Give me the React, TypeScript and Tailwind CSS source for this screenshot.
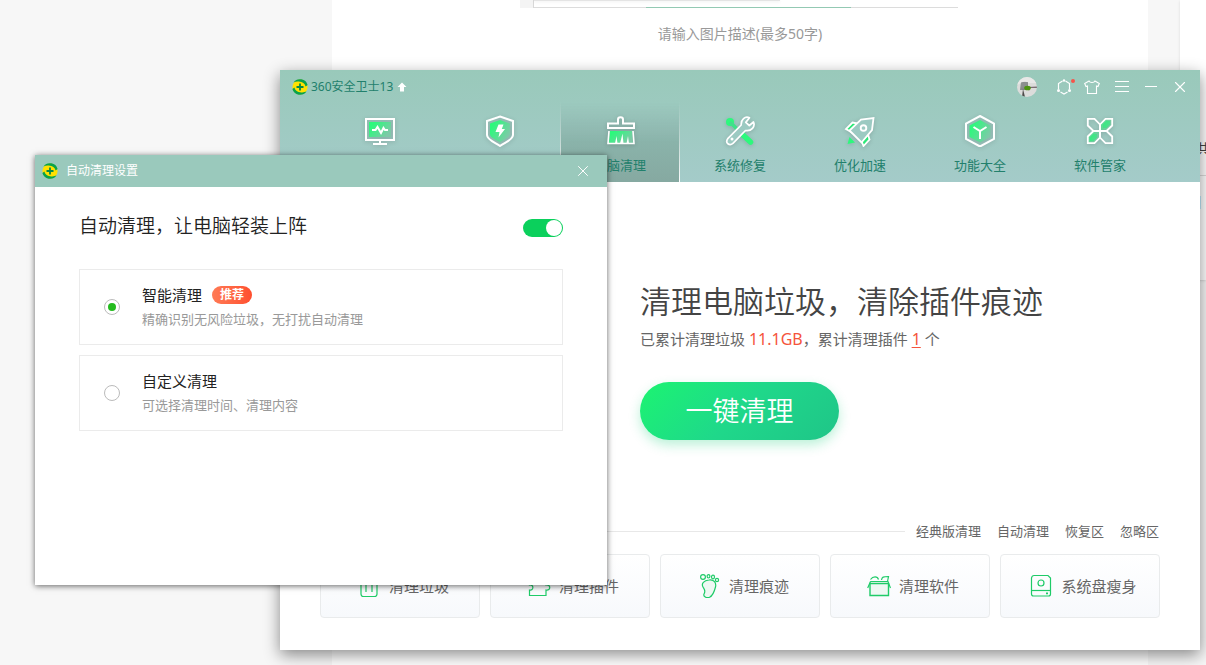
import { useState } from 'react'
import type { ReactNode } from 'react'
import { X } from 'lucide-react'

function Logo() {
  return (
    <svg className="w-4 h-4 shrink-0" viewBox="0 0 16 16" aria-hidden="true">
      <circle cx="8" cy="8" r="7.6" fill="#ffe100" />
      <path d="M1.5 3.400A8 8 0 0 1 15.600 6L13.600 7.500A6.500 6.500 0 0 0 8 2.800C5.500 2.400 3.500 2.600 1.500 3.400Z" fill="#0aa34a" />
      <path d="M14.500 12.600A8 8 0 0 1 .4 10L2.400 8.500A6.500 6.500 0 0 0 8 13.200C10.500 13.600 12.500 13.400 14.500 12.600Z" fill="#0aa34a" />
      <path d="M8 4.500V11.500M4.500 8H11.500" stroke="#068a45" strokeWidth="1.800" />
    </svg>
  )
}

function NavIcon({ children }: { children: ReactNode }) {
  return (
    <svg
      className="w-8 h-8 drop-shadow-sm"
      viewBox="0 0 32 32"
      fill="none"
      stroke="#fff"
      strokeWidth="2"
      aria-hidden="true"
    >
      {children}
    </svg>
  )
}

function CardIcon({ children }: { children: ReactNode }) {
  return (
    <svg
      className="w-6 h-6 shrink-0"
      viewBox="0 0 24 24"
      fill="none"
      stroke="#1fcb68"
      strokeWidth="1.2"
      aria-hidden="true"
    >
      {children}
    </svg>
  )
}

const tabs = [
  {
    label: '电脑体检',
    icon: (
      <NavIcon>
        <path d="M2 4H30V25H2Z" />
        <rect x="5" y="7" width="22" height="15" fill="url(#glow)" stroke="none" />
        <path d="M8 15H11.500L13.500 12L17 18L19.500 13L21 15H24" />
        <path d="M16 25V29M9 29H23" />
      </NavIcon>
    ),
  },
  {
    label: '木马查杀',
    icon: (
      <NavIcon>
        <path d="M16 1.5L29 6V20C29 25 20 28 16 31C12 28 3 25 3 20V6Z" />
        <path d="M16 5L26 8.5V19C26 23 19 25 16 27.5C13 25 6 23 6 19V8.5Z" fill="url(#glow)" stroke="none" />
        <path d="M14.5 9.5H19.5L17.8 14H21L14.5 22.5L15.5 17H11.5Z" fill="#fff" stroke="none" />
      </NavIcon>
    ),
  },
  {
    label: '电脑清理',
    icon: (
      <NavIcon>
        <path d="M4 8.5H14V4.500C14 1.500 19 1.500 19 4.500V8.500H30V13H4Z" />
        <path d="M6 16H28L29 28H5Z" fill="url(#glow)" stroke="none" />
        <path d="M5 16L4 28.500H30L29 16" strokeWidth="1.600" />
        <path d="M11 28.500L12.500 21L13.500 28.500ZM16 28.500L18.500 18.500L19.500 28.500ZM22.500 28.500L24 21L25 28.500Z" fill="#fff" stroke="none" />
      </NavIcon>
    ),
  },
  {
    label: '系统修复',
    icon: (
      <NavIcon>
        <circle cx="6" cy="7" r="4" fill="#2cf97c" stroke="none" />
        <path d="M6 7L13 14" stroke="#3fe08a" strokeWidth="3.5" />
        <path d="M19 20L26.500 27" stroke="#2cf97c" strokeWidth="5.500" strokeLinecap="round" />
        <path
          d="M25.500 2.800C21 .8 16.800 4.500 17.200 10L4 23.300C.5 28 5.500 31.500 9.200 28.200L21.500 15.500C27.500 16.500 31.500 11.500 29.500 7L25.300 10.500L21.800 7.400Z"
          fill="#9ccac2"
          strokeWidth="1.700"
          strokeLinejoin="round"
        />
        <circle cx="8" cy="24" r="1.5" fill="#fff" stroke="none" />
      </NavIcon>
    ),
  },
  {
    label: '优化加速',
    icon: (
      <NavIcon>
        <path d="M3.500 29L5.500 22L11 27.500Z" fill="#2cf97c" stroke="none" />
        <path d="M8 17.500L2 14L8.500 7.500L13.500 8.500Z" fill="#2ce878" strokeWidth="1.8" />
        <path d="M17.500 26L19.500 31L25.500 24.500L24 19.500Z" fill="#2ce878" strokeWidth="1.8" />
        <path d="M5.500 15.500L17.500 27.500L28 15L29.500 3L17 4.500Z" fill="#9ccac2" strokeWidth="1.8" />
        <circle cx="19.500" cy="13" r="2.800" strokeWidth="1.900" />
      </NavIcon>
    ),
  },
  {
    label: '功能大全',
    icon: (
      <NavIcon>
        <path d="M16 1L30 8.500V24L16 31.500L2 24V8.500Z" />
        <path d="M16 5L26.500 10.500V22L16 27.500L5.500 22V10.500Z" fill="url(#glow)" stroke="none" />
        <path d="M9.500 12L16 16L22.500 12M16 16V24" />
      </NavIcon>
    ),
  },
  {
    label: '软件管家',
    icon: (
      <NavIcon>
        <path d="M19 13V9.500L22.500 6H26V9.500L22.500 13Z" fill="#2ce878" stroke="none" />
        <path d="M13 19V22.500L9.500 26H6V22.500L9.500 19Z" fill="#2ce878" stroke="none" />
        <path d="M16 16V9.500L21.500 3.800H28.200V10.500L22.500 16Z" fill="url(#glow)" fillOpacity="0.6" strokeWidth="1.800" />
        <path d="M16 16V22.500L10.500 28.200H3.800V21.500L9.500 16Z" fill="url(#glow)" fillOpacity="0.6" strokeWidth="1.800" />
        <path d="M16 16H9.500L3.800 10.500V3.800H10.500L16 9.500Z" strokeWidth="1.800" />
        <path d="M16 16H22.500L28.200 21.500V28.200H21.500L16 22.500Z" strokeWidth="1.800" />
      </NavIcon>
    ),
  },
]

const cards = [
  {
    label: '清理垃圾',
    icon: (
      <CardIcon>
        <path d="M2 6H22M8 6V3H16V6M4 6V20Q4 22.500 6.500 22.500H17.500Q20 22.500 20 20V6M9 10V18M15 10V18" />
      </CardIcon>
    ),
  },
  {
    label: '清理插件',
    icon: (
      <CardIcon>
        <path d="M3 6H8C7 1 15 1 14 6H19V11C24 10 24 17 19 16V21.500H2.500V16C7 17 7 10 2.500 11Z" />
      </CardIcon>
    ),
  },
  {
    label: '清理痕迹',
    icon: (
      <CardIcon>
        <path
          d="M12 6C17 5 19.500 9 18.500 13C17.500 17 15.500 22 12.500 23.300C9.500 24.500 6 22.500 7 20C9 17 7.500 15.500 6 13C4 9.500 7 6.500 12 6Z"
          fill="#eef8f3"
        />
        <circle cx="6" cy="3" r="2.400" />
        <ellipse cx="11.500" cy="2.300" rx="1.400" ry="1.700" />
        <ellipse cx="16" cy="3" rx="1.500" ry="1.800" />
        <circle cx="20" cy="6" r="1.600" />
      </CardIcon>
    ),
  },
  {
    label: '清理软件',
    icon: (
      <CardIcon>
        <path d="M3 9.500H21.500V21.500H3Z" fill="#eef8f3" strokeWidth="1.400" />
        <path d="M3.500 7.500H21L23.500 14M3.500 7.500L.7 14M3.500 5.500C6 2 10.500 2 11.500 5.500M14.500 6C15 3 16 2.500 21.500 2.500L20.500 7.500" />
      </CardIcon>
    ),
  },
  {
    label: '系统盘瘦身',
    icon: (
      <CardIcon>
        <path d="M5 1.500H19L21.500 4V20Q21.500 22 19.500 22H4.500Q2.500 22 2.500 20V4Q3 1.500 5 1.500Z" />
        <path d="M2.500 16.500H21.500" />
        <circle cx="12" cy="9" r="3" />
        <path d="M17 19.300H19" strokeWidth="1.800" />
      </CardIcon>
    ),
  },
]

const links = ['经典版清理', '自动清理', '恢复区', '忽略区']

function ArticlePage() {
  return (
    <div className="min-h-screen flex bg-[#f7f7f7]">
      <div className="flex-1 ml-[332px] bg-white flex flex-col items-center">
        <div className="w-[438px] h-2 -ml-[2px] flex bg-[#f4f4f4] pl-[13px]">
          <div className="flex-1 flex flex-col justify-between bg-white border-l border-[#d8d8d8]">
            <div className="w-[246px] h-px bg-[#e4e4e4] shadow-sm" />
            <div className="h-px pl-[112px] bg-[#dcdcdc]">
              <div className="w-[205px] h-px bg-[#93c9b3]" />
            </div>
          </div>
        </div>
        <p className="mt-4 text-sm leading-5 text-[#999]">请输入图片描述(最多50字)</p>
      </div>
      <div className="w-[58px] pl-8">
        <div className="h-[280px] pt-[139px] bg-white shadow text-sm leading-5 text-[#444]">
          <p className="pl-4">共</p>
          <div className="mt-4 border-t border-[#ddd]" />
          <p className="mt-4 pl-2 font-bold">目</p>
        </div>
      </div>
    </div>
  )
}

function MainWindow() {
  return (
    <main className="absolute left-[280px] right-[6px] top-[70px] bg-white shadow-[0_5px_15px_rgba(0,0,0,0.45)]">
      <header className="bg-linear-to-b from-[#99c9ba] to-[#a4cbc9]">
        <div className="h-8 flex items-center pl-3 pr-[11px] pt-0.5">
          <Logo />
          <h1 className="ml-[3px] text-xs text-[#22806c]">360安全卫士13</h1>
          <svg className="w-[10px] h-[10px] ml-1" viewBox="0 0 10 10" aria-hidden="true">
            <path d="M5 .5L9.500 5H7V9.500H3V5H.5Z" fill="#fff" />
          </svg>
          <div className="ml-auto flex items-center text-white">
            <button aria-label="账号" className="mr-[18px]">
              <svg className="w-5 h-5" viewBox="0 0 20 20">
                <defs>
                  <clipPath id="avatar">
                    <circle cx="10" cy="10" r="10" />
                  </clipPath>
                </defs>
                <g clipPath="url(#avatar)">
                  <rect width="20" height="20" fill="#dcdcdb" />
                  <path d="M4 5H11V9L9 13H3Z" fill="#858988" />
                  <path d="M0 0H20V6H11L8 4L0 8Z" fill="#e8e8e7" />
                  <path d="M4 5.500L11 5L10.500 9.500L4 11Z" fill="#8b8f8e" />
                  <path d="M6 12L8 20H5Z" fill="#4d4b4a" />
                  <path d="M11 10L20 9.500V11H13L12 14Z" fill="#7a6f74" />
                  <ellipse cx="10.500" cy="11" rx="3.300" ry="2.300" fill="#4c9310" />
                </g>
              </svg>
            </button>
            <button aria-label="消息" className="mr-[9px]">
              <svg className="w-5 h-5" viewBox="0 0 20 20" fill="none" stroke="#fff" strokeWidth="1.200">
                <path d="M7.500 4L3.500 6.500V12M5.500 15L9 17L12.500 15M14.500 12V6.500L10.500 4" />
                <circle cx="9" cy="3.500" r="1.200" fill="#fff" stroke="none" />
                <circle cx="3.500" cy="13.500" r="1.500" fill="#fff" stroke="none" />
                <circle cx="14.500" cy="13.500" r="1.500" fill="#fff" stroke="none" />
                <circle cx="18" cy="4" r="2" fill="#f6544a" stroke="none" />
              </svg>
            </button>
            <button aria-label="皮肤" className="mr-[14px]">
              <svg className="w-4 h-4" viewBox="0 0 16 16" fill="none" stroke="#fff" strokeWidth="1.100">
                <path d="M5 2C6 4 10 4 11 2L15.300 4.500L14 7.500L12.500 7V14.500H3.500V7L2 7.500L.7 4.500Z" />
              </svg>
            </button>
            <button aria-label="菜单" className="mr-[14px]">
              <svg className="w-4 h-4" viewBox="0 0 16 16" stroke="#fff">
                <path d="M1 2.500H15M1 7.500H15M1 12.500H15" />
              </svg>
            </button>
            <button aria-label="最小化" className="mr-[13px]">
              <svg className="w-[14px] h-4" viewBox="0 0 14 16" stroke="#fff">
                <path d="M1 7.500H13" />
              </svg>
            </button>
            <button aria-label="关闭">
              <X className="w-[18px] h-[18px]" strokeWidth={1.5} />
            </button>
          </div>
        </div>
        <nav className="px-10 grid grid-cols-7">
          {tabs.map((tab, i) => (
            <button
              key={tab.label}
              className={
                i === 2
                  ? 'h-20 pt-[13px] flex flex-col items-center border-x [border-image:linear-gradient(transparent,white)_1] bg-linear-to-b from-transparent via-[#8ab3aa] to-[#86a9a1] text-[13px] text-[#22806c]'
                  : 'h-20 pt-[13px] flex flex-col items-center text-[13px] text-[#22806c]'
              }
            >
              {tab.icon}
              <span className="mt-2 leading-5">{tab.label}</span>
            </button>
          ))}
        </nav>
      </header>

      <section className="pl-[360px] pt-[99px]">
        <h2 className="text-[31px] leading-10 font-[350] text-[#444]">清理电脑垃圾，清除插件痕迹</h2>
        <p className="mt-[6px] text-[15px] leading-6 text-[#666]">
          已累计清理垃圾 <span className="text-base leading-6 text-[#f5543c]">11.1GB</span>，累计清理插件{' '}
          <a href="#plugins" className="text-base leading-6 text-[#f5543c] underline underline-offset-2">1</a> 个
        </p>
        <button className="mt-[31px] w-[199px] h-[58px] rounded-full bg-linear-135 from-[#1cf470] via-[#1fd88a] to-[#1fc588] text-[27px] font-[350] text-white shadow-[0_5px_12px_rgba(30,210,125,0.3)]">
          一键清理
        </button>
      </section>

      <section className="px-10 pt-[81px] pb-8">
        <div className="flex items-center pr-px text-[13px] leading-5 text-[#666]">
          <div className="flex-1 mr-[11px] border-t border-[#e8e8e8]" />
          <div className="flex gap-4">
            {links.map((link) => (
              <a key={link} href="#clean">
                {link}
              </a>
            ))}
          </div>
        </div>
        <div className="mt-[13px] grid grid-cols-5 gap-[10px]">
          {cards.map((card) => (
            <button
              key={card.label}
              className="h-16 pl-[6px] flex items-center justify-center gap-2 rounded border border-[#e9ebec] bg-linear-to-b from-white to-[#f7f9fc] text-[15px] text-[#666]"
            >
              {card.icon}
              <span>{card.label}</span>
            </button>
          ))}
        </div>
      </section>
    </main>
  )
}

const options = [
  { id: 'smart', title: '智能清理', desc: '精确识别无风险垃圾，无打扰自动清理', badge: '推荐' },
  { id: 'custom', title: '自定义清理', desc: '可选择清理时间、清理内容' },
]

function SettingsDialog() {
  const [enabled, setEnabled] = useState(true)
  const [mode, setMode] = useState('smart')

  return (
    <div
      role="dialog"
      aria-labelledby="dialog-title"
      className="absolute left-[35px] top-[155px] w-[572px] bg-white shadow-[0_1px_6px_rgba(0,0,0,0.6)]"
    >
      <div className="h-8 flex items-center pl-[7px] pr-[15px] bg-[#9ac9bc] text-white">
        <Logo />
        <h2 id="dialog-title" className="ml-2 text-xs">自动清理设置</h2>
        <button aria-label="关闭" className="ml-auto">
          <X className="w-[18px] h-[18px]" strokeWidth={1.3} />
        </button>
      </div>
      <div className="px-11 pt-[25px] pb-[154px]">
        <div className="flex items-center justify-between">
          <label htmlFor="auto-clean" className="text-[19px] leading-7 font-[350] text-[#222]">
            自动清理，让电脑轻装上阵
          </label>
          <input
            id="auto-clean"
            type="checkbox"
            role="switch"
            checked={enabled}
            onChange={(e) => setEnabled(e.target.checked)}
            className="mt-1 appearance-none w-10 h-[18px] p-px flex rounded-full bg-gray-300 checked:bg-[#0bd05c] checked:justify-end before:block before:w-4 before:h-4 before:rounded-full before:bg-white"
          />
        </div>
        <div className="mt-[29px] flex flex-col gap-[10px]">
          {options.map((option) => (
            <label
              key={option.id}
              className="h-[76px] pl-6 flex items-center gap-[22px] border border-[#ebebeb]"
            >
              <input
                type="radio"
                name="mode"
                value={option.id}
                checked={mode === option.id}
                onChange={() => setMode(option.id)}
                className="appearance-none w-4 h-4 flex items-center justify-center rounded-full border border-[#bbb] before:w-2 before:h-2 before:rounded-full checked:before:bg-[#24bb1e]"
              />
              <span className="flex flex-col">
                <span className="flex items-center text-[15px] leading-6 text-[#222]">
                  {option.title}
                  {option.badge && (
                    <span className="ml-[10px] px-2 rounded-full bg-linear-to-r from-[#ff7a55] to-[#ff4e2e] text-xs leading-[18px] font-bold text-white">
                      {option.badge}
                    </span>
                  )}
                </span>
                <span className="text-[13px] leading-6 text-[#999]">{option.desc}</span>
              </span>
            </label>
          ))}
        </div>
      </div>
    </div>
  )
}

export default function App() {
  return (
    <div className="relative min-h-screen overflow-hidden font-['Noto_Sans','Noto_Sans_CJK_SC',sans-serif]">
      <svg className="absolute w-0 h-0" aria-hidden="true">
        <defs>
          <linearGradient id="glow" x1="0" y1="0" x2="1" y2="0.6">
            <stop offset="0.2" stopColor="#2cf97c" />
            <stop offset="1" stopColor="#7fc9a8" />
          </linearGradient>
        </defs>
      </svg>
      <ArticlePage />
      <MainWindow />
      <SettingsDialog />
    </div>
  )
}
